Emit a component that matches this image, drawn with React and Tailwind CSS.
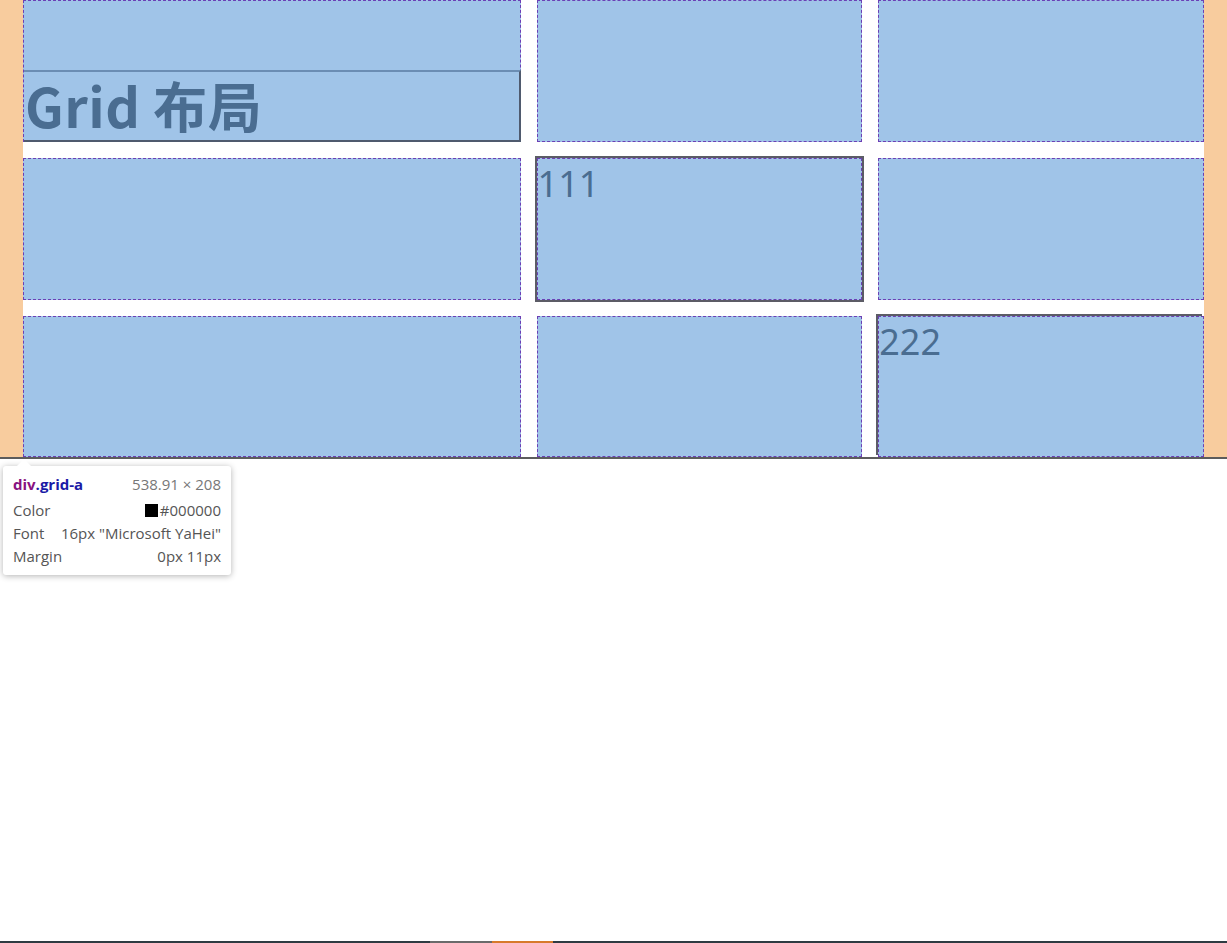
import React from "react";

const cell = "bg-[#a0c4e8] border border-dashed border-[#6b3fb5]";

export default function App() {
  return (
    <div className="relative h-[943px] flex flex-col bg-white" style={{ fontFamily: '"Noto Sans", "Noto Sans CJK SC", sans-serif' }}>
      <div className="bg-[#f8cc9e] px-[23px] border-b-2 border-[#5c5c5c]">
        <div className="grid grid-cols-[498fr_326fr_326fr] grid-rows-[142px_142px_141px] gap-x-[16px] gap-y-[16px] bg-white">
          <div className={`${cell} flex flex-col justify-end`}>
            <h1
              className="h-[72px] border-t-2 border-t-[#6b8db3] border-r-2 border-r-[#4f5a6e] border-b-2 border-b-[#4f5a6e] text-[54px] leading-[66px] font-bold text-[#4a6d91] pl-[1px] -mr-[1px] -mb-[1px] tracking-[0.5px]"
              style={{ fontFamily: '"Noto Sans CJK SC", "Noto Sans", sans-serif' }}
            >
              Grid 布局
            </h1>
          </div>
          <div className={cell}></div>
          <div className={cell}></div>
          <div className={cell}></div>
          <div className={`${cell} outline-2 outline-[#5c5c66] text-[36px] leading-[50px] text-[#4a6d91]`}>111</div>
          <div className={cell}></div>
          <div className={cell}></div>
          <div className={cell}></div>
          <div className={`${cell} shadow-[-2px_-2px_0_#5c5c66] text-[36px] leading-[50px] text-[#4a6d91]`}>222</div>
        </div>
      </div>

      <div className="flex-1"></div>

      <div className="h-[2px] bg-[#2f3b42] flex">
        <div className="w-[430px]"></div>
        <div className="w-[62px] bg-[#6a6a6a]"></div>
        <div className="w-[61px] bg-[#d87a2b]"></div>
      </div>

      <div className="absolute left-[3px] top-[466px] w-[228px] bg-white rounded-[3px] shadow-[0_1px_6px_rgba(0,0,0,0.3)] pl-[10px] pr-[10px] pt-[7px] pb-[7px] text-[15px] leading-[23px]" style={{ fontFamily: '"Open Sans", "Noto Sans", sans-serif' }}>
        <div className="absolute -top-[7px] left-[14px] w-0 h-0 border-l-[7px] border-l-transparent border-r-[7px] border-r-transparent border-b-[7px] border-b-white"></div>
        <div className="flex justify-between mb-[3px]">
          <span className="font-bold"><span className="text-[#881280]">div</span><span className="text-[#1a1aa6]">.grid-a</span></span>
          <span className="text-[#777]">538.91 × 208</span>
        </div>
        <div className="flex justify-between text-[#555]">
          <span>Color</span>
          <span className="flex items-center gap-[2px]"><span className="inline-block w-[13px] h-[13px] bg-black"></span>#000000</span>
        </div>
        <div className="flex justify-between text-[#555]">
          <span>Font</span>
          <span>16px "Microsoft YaHei"</span>
        </div>
        <div className="flex justify-between text-[#555]">
          <span>Margin</span>
          <span>0px 11px</span>
        </div>
      </div>
    </div>
  );
}
